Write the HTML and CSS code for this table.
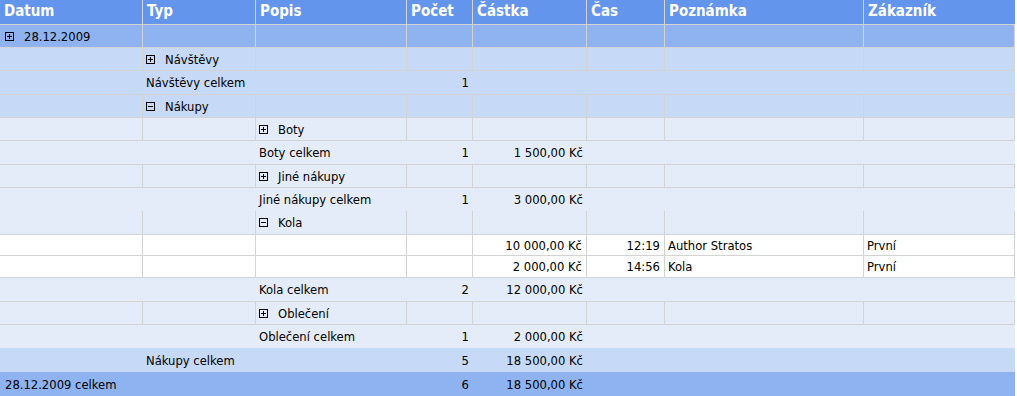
FILE: index.html
```html
<!DOCTYPE html>
<html lang="cs">
<head>
<meta charset="utf-8">
<title>Grid</title>
<link rel="stylesheet" href="styles.css">
</head>
<body>
<div class="grid">
  <div class="row hdr">
    <div class="c">Datum</div><div class="c">Typ</div><div class="c">Popis</div><div class="c">Počet</div><div class="c">Částka</div><div class="c">Čas</div><div class="c">Poznámka</div><div class="c">Zákazník</div>
  </div>

  <div class="row grp l0">
    <div class="c"><svg class="tg" viewBox="0 0 9 9"><rect x="0.5" y="0.5" width="8" height="8"/><path d="M2 4.5h5M4.5 2v5"/></svg>28.12.2009</div><div class="c"></div><div class="c"></div><div class="c"></div><div class="c"></div><div class="c"></div><div class="c"></div><div class="c"></div>
  </div>

  <div class="row grp l1">
    <div class="c"></div><div class="c"><svg class="tg" viewBox="0 0 9 9"><rect x="0.5" y="0.5" width="8" height="8"/><path d="M2 4.5h5M4.5 2v5"/></svg>Návštěvy</div><div class="c"></div><div class="c"></div><div class="c"></div><div class="c"></div><div class="c"></div><div class="c"></div>
  </div>

  <div class="row sum line l1">
    <div class="c"></div><div class="c">Návštěvy celkem</div><div class="c"></div><div class="c num">1</div><div class="c num"></div><div class="c"></div><div class="c"></div><div class="c"></div>
  </div>

  <div class="row grp l1">
    <div class="c"></div><div class="c"><svg class="tg" viewBox="0 0 9 9"><rect x="0.5" y="0.5" width="8" height="8"/><path d="M2 4.5h5"/></svg>Nákupy</div><div class="c"></div><div class="c"></div><div class="c"></div><div class="c"></div><div class="c"></div><div class="c"></div>
  </div>

  <div class="row grp l2">
    <div class="c"></div><div class="c"></div><div class="c"><svg class="tg" viewBox="0 0 9 9"><rect x="0.5" y="0.5" width="8" height="8"/><path d="M2 4.5h5M4.5 2v5"/></svg>Boty</div><div class="c"></div><div class="c"></div><div class="c"></div><div class="c"></div><div class="c"></div>
  </div>

  <div class="row sum line l2">
    <div class="c"></div><div class="c"></div><div class="c">Boty celkem</div><div class="c num">1</div><div class="c num">1&nbsp;500,00 Kč</div><div class="c"></div><div class="c"></div><div class="c"></div>
  </div>

  <div class="row grp l2">
    <div class="c"></div><div class="c"></div><div class="c"><svg class="tg" viewBox="0 0 9 9"><rect x="0.5" y="0.5" width="8" height="8"/><path d="M2 4.5h5M4.5 2v5"/></svg>Jiné nákupy</div><div class="c"></div><div class="c"></div><div class="c"></div><div class="c"></div><div class="c"></div>
  </div>

  <div class="row sum l2">
    <div class="c"></div><div class="c"></div><div class="c">Jiné nákupy celkem</div><div class="c num">1</div><div class="c num">3&nbsp;000,00 Kč</div><div class="c"></div><div class="c"></div><div class="c"></div>
  </div>

  <div class="row grp tall l2">
    <div class="c"></div><div class="c"></div><div class="c"><svg class="tg" viewBox="0 0 9 9"><rect x="0.5" y="0.5" width="8" height="8"/><path d="M2 4.5h5"/></svg>Kola</div><div class="c"></div><div class="c"></div><div class="c"></div><div class="c"></div><div class="c"></div>
  </div>

  <div class="row data short">
    <div class="c"></div><div class="c"></div><div class="c"></div><div class="c"></div><div class="c num">10&nbsp;000,00 Kč</div><div class="c num">12:19</div><div class="c">Author Stratos</div><div class="c">První</div>
  </div>

  <div class="row data">
    <div class="c"></div><div class="c"></div><div class="c"></div><div class="c"></div><div class="c num">2&nbsp;000,00 Kč</div><div class="c num">14:56</div><div class="c">Kola</div><div class="c">První</div>
  </div>

  <div class="row sum line l2">
    <div class="c"></div><div class="c"></div><div class="c">Kola celkem</div><div class="c num">2</div><div class="c num">12&nbsp;000,00 Kč</div><div class="c"></div><div class="c"></div><div class="c"></div>
  </div>

  <div class="row grp l2">
    <div class="c"></div><div class="c"></div><div class="c"><svg class="tg" viewBox="0 0 9 9"><rect x="0.5" y="0.5" width="8" height="8"/><path d="M2 4.5h5M4.5 2v5"/></svg>Oblečení</div><div class="c"></div><div class="c"></div><div class="c"></div><div class="c"></div><div class="c"></div>
  </div>

  <div class="row sum l2">
    <div class="c"></div><div class="c"></div><div class="c">Oblečení celkem</div><div class="c num">1</div><div class="c num">2&nbsp;000,00 Kč</div><div class="c"></div><div class="c"></div><div class="c"></div>
  </div>

  <div class="row sum top l1">
    <div class="c"></div><div class="c">Nákupy celkem</div><div class="c"></div><div class="c num">5</div><div class="c num">18&nbsp;500,00 Kč</div><div class="c"></div><div class="c"></div><div class="c"></div>
  </div>

  <div class="row sum top l0">
    <div class="c">28.12.2009 celkem</div><div class="c"></div><div class="c"></div><div class="c num">6</div><div class="c num">18&nbsp;500,00 Kč</div><div class="c"></div><div class="c"></div><div class="c"></div>
  </div>
</div>
</body>
</html>
```

FILE: styles.css
```css
body {
  margin: 0;
  background: #ffffff;
  color: #000000;
  font-family: "DejaVu Sans Condensed", "DejaVu Sans", sans-serif;
  font-stretch: condensed;
  font-size: 12.9px;
}

.grid {
  width: 1015px;
}

.row {
  display: grid;
  grid-template-columns: 143px 113px 151px 66px 114px 78px 199px 151px;
  box-sizing: border-box;
}

.c {
  display: flex;
  align-items: center;
  box-sizing: border-box;
  min-width: 0;
  padding: 0 4px 0 3px;
  white-space: nowrap;
  overflow: hidden;
}

.c:first-child {
  padding-left: 5px;
}

.num {
  justify-content: flex-end;
}

.hdr {
  height: 25px;
  background: #6495ed;
  border-bottom: 1px solid #d3d3d3;
  color: #ffffff;
  font-weight: bold;
  font-size: 15px;
}

.hdr .c {
  padding: 0 4px 2px 4px;
  border-right: 1px solid #d3d3d3;
}

.hdr .c:last-child {
  border-right: none;
}

.l0 { background: #8fb3f1; }
.l1 { background: #c6d9f7; }
.l2 { background: #e4ecf9; }

.grp {
  height: 23px;
  border-bottom: 1px solid #d3d3d3;
}

.grp.tall {
  height: 24px;
}

.grp .c,
.data .c {
  border-right: 1px solid #d3d3d3;
}

.sum {
  height: 23px;
}

.sum.line {
  height: 24px;
  border-bottom: 1px solid #d3d3d3;
}

.sum.top {
  height: 24px;
}

.data {
  height: 22px;
  background: #ffffff;
  border-bottom: 1px solid #d3d3d3;
}

.data.short {
  height: 21px;
}

.tg {
  flex: none;
  display: block;
  width: 9px;
  height: 9px;
  margin-right: 10px;
  fill: none;
  stroke: #000000;
  stroke-width: 1;
  shape-rendering: crispEdges;
}
```
